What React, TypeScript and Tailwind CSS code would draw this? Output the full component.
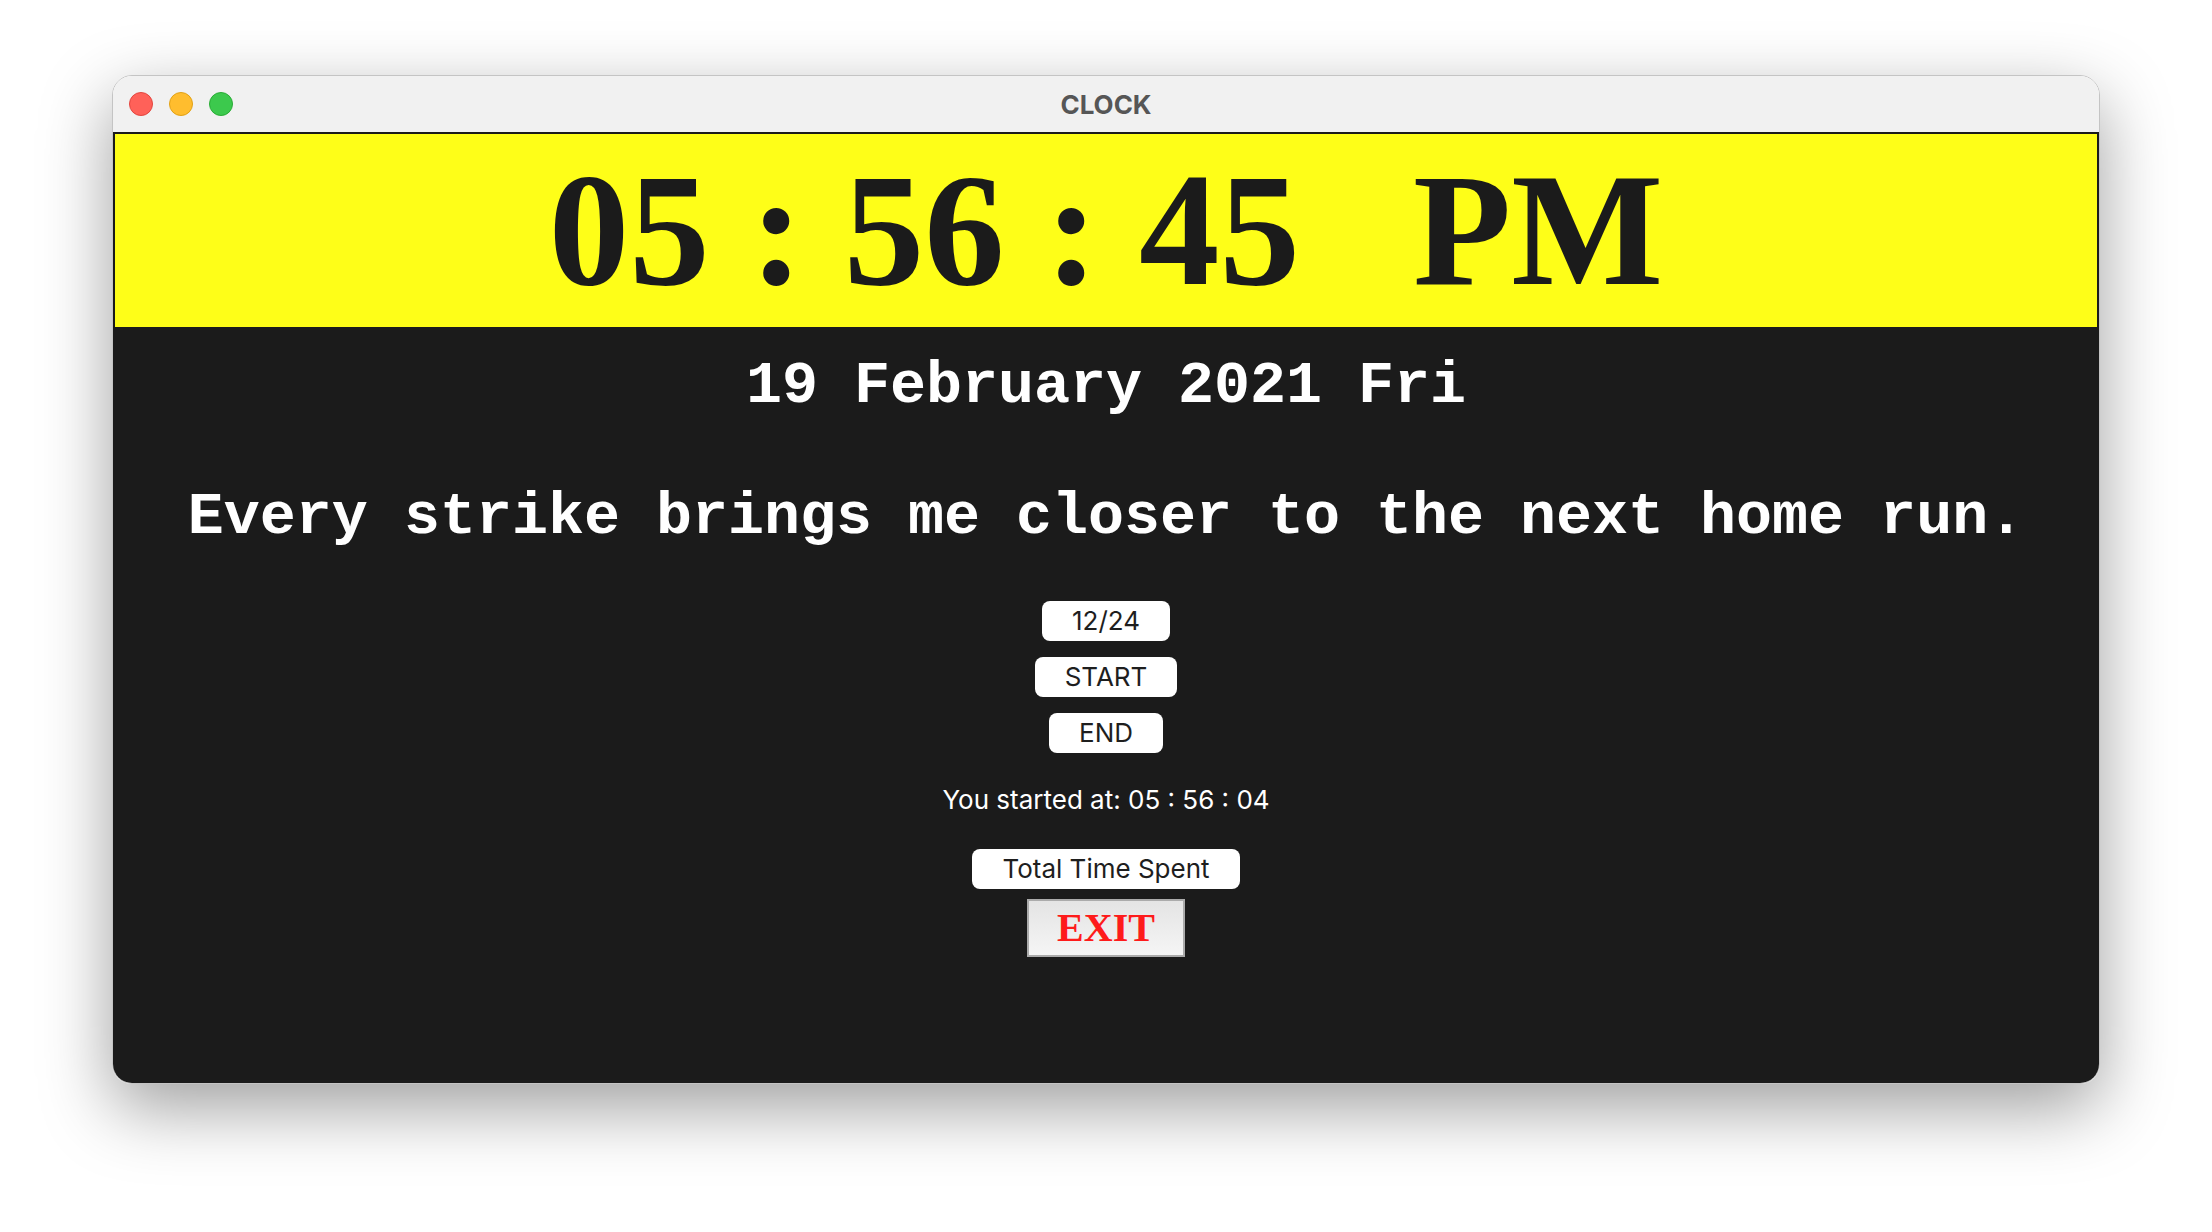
import React from "react";

const mono = { fontFamily: '"Liberation Mono", "Courier New", monospace' };
const serif = { fontFamily: '"Liberation Serif", "Times New Roman", serif' };
const sans = { fontFamily: 'Inter, "Noto Sans", sans-serif' };

const TkButton: React.FC<{ label: string }> = ({ label }) => (
  <button
    type="button"
    className="h-[40px] px-[30px] rounded-[8px] bg-white text-[#1e1e1e] text-[26px] leading-none flex items-center justify-center"
    style={sans}
  >
    {label}
  </button>
);

const App: React.FC = () => {
  return (
    <div className="w-[2212px] h-[1232px] bg-white flex justify-center pt-[75px]">
      <div className="w-[1988px] h-[1009px] rounded-[20px] overflow-hidden flex flex-col border border-[#c4c4c4] shadow-[0_24px_70px_rgba(0,0,0,0.38)]">
        {/* title bar */}
        <div className="h-[56px] bg-[#f1f1f1] relative flex items-center shrink-0">
          <div className="flex items-center gap-[16px] pl-[16px]">
            <span className="w-[24px] h-[24px] rounded-full bg-[#ff6159] border border-[#e2463f]" />
            <span className="w-[24px] h-[24px] rounded-full bg-[#ffbd2e] border border-[#e1a116]" />
            <span className="w-[24px] h-[24px] rounded-full bg-[#3cc94d] border border-[#2aac36]" />
          </div>
          <div
            className="absolute inset-0 flex items-center justify-center text-[26px] font-bold text-[#565656]"
            style={sans}
          >
            CLOCK
          </div>
        </div>

        {/* body */}
        <div className="flex-1 bg-[#1b1b1b] px-[2px] pt-[2px] flex flex-col items-center">
          <div className="w-full h-[193px] bg-[#fefe18] flex items-center justify-center">
            <div className="text-[161px] font-bold leading-none text-[#1b1b1b] whitespace-pre" style={serif}>
              05 : 56 : 45<span className="ml-[113px]">PM</span>
            </div>
          </div>

          <div className="mt-[29px] text-[60px] leading-[60px] font-bold text-white whitespace-pre" style={mono}>
            19 February 2021 Fri
          </div>

          <div className="mt-[71px] text-[60px] leading-[60px] font-bold text-white whitespace-pre" style={mono}>
            Every strike brings me closer to the next home run.
          </div>

          <div className="mt-[54px] flex flex-col items-center gap-[16px]">
            <TkButton label="12/24" />
            <TkButton label="START" />
            <TkButton label="END" />
          </div>

          <div className="mt-[31px] text-[26px] leading-[32px] text-white" style={sans}>
            You started at: 05 : 56 : 04
          </div>

          <div className="mt-[33px]">
            <TkButton label="Total Time Spent" />
          </div>

          <button
            type="button"
            className="mt-[10px] w-[158px] h-[58px] border-2 border-[#ababab] bg-gradient-to-b from-[#e4e4e4] to-[#f5f5f5] text-[#fe1b1b] text-[40px] font-bold leading-none flex items-center justify-center"
            style={serif}
          >
            EXIT
          </button>
        </div>
      </div>
    </div>
  );
};

export default App;
